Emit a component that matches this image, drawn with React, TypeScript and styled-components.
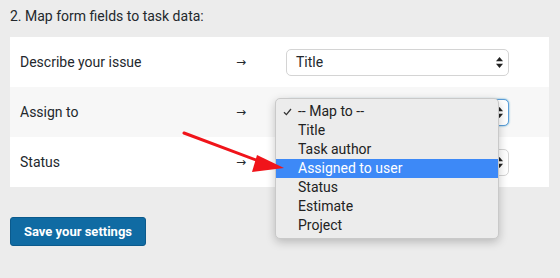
import React from 'react';
import styled, { createGlobalStyle } from 'styled-components';

const GlobalStyle = createGlobalStyle`
  html, body {
    margin: 0;
    padding: 0;
    background: #ececec;
  }
  body {
    font-family: Roboto, "Liberation Sans", Arial, sans-serif;
    color: #23282d;
  }
`;

const Page = styled.div`
  position: relative;
  width: 560px;
  height: 278px;
  padding: 8px 10px 0;
  box-sizing: border-box;
`;

const Heading = styled.h3`
  margin: 0 0 12px;
  font-size: 14px;
  font-weight: 400;
  line-height: 17px;
  color: #23282d;
`;

const Table = styled.div`
  width: 539px;
  background: #fff;
`;

const Row = styled.div<{ $striped?: boolean }>`
  display: grid;
  grid-template-columns: 216px 50px 223px;
  align-items: center;
  height: 50px;
  padding: 0 10px;
  background: ${(p) => (p.$striped ? '#f7f7f7' : '#fff')};
`;

const Label = styled.span`
  font-size: 14px;
  color: #23282d;
`;

const Arrow = styled.span`
  font-family: "DejaVu Sans", sans-serif;
  font-size: 12px;
  color: #23282d;
`;

const SelectWrap = styled.div`
  position: relative;
`;

const SelectBox = styled.div<{ $focused?: boolean }>`
  display: flex;
  align-items: center;
  justify-content: space-between;
  height: 27px;
  box-sizing: border-box;
  padding: 0 5px 0 9px;
  background: #fff;
  border: 1px solid ${(p) => (p.$focused ? '#5b9dd9' : '#d4d4d4')};
  border-radius: 5px;
  box-shadow: ${(p) => (p.$focused ? '0 0 2px rgba(30, 140, 190, 0.8)' : 'none')};
  font-size: 14px;
  color: #23282d;
`;

const Menu = styled.ul`
  position: absolute;
  left: -11px;
  top: -1px;
  width: 224px;
  margin: 0;
  padding: 3px 0;
  list-style: none;
  background: #ececec;
  border: 1px solid #c9c9c9;
  border-radius: 5px;
  box-shadow: 0 3px 10px rgba(0, 0, 0, 0.22);
  box-sizing: border-box;
  z-index: 2;
`;

const MenuItem = styled.li<{ $active?: boolean }>`
  position: relative;
  height: 19px;
  line-height: 19px;
  padding-left: 22px;
  font-size: 14px;
  color: ${(p) => (p.$active ? '#fff' : '#222')};
  background: ${(p) => (p.$active ? '#3d89f7' : 'transparent')};
`;

const Check = styled.svg`
  position: absolute;
  left: 7px;
  top: 6px;
`;

const SaveButton = styled.button`
  margin-top: 30px;
  height: 29px;
  padding: 0 13px;
  background: #106ba3;
  border: 1px solid #0b5a8c;
  border-radius: 3px;
  color: #fff;
  font-family: Roboto, "Liberation Sans", Arial, sans-serif;
  font-size: 13px;
  font-weight: 700;
  cursor: pointer;
`;

const Pointer = styled.svg`
  position: absolute;
  left: 180px;
  top: 128px;
  z-index: 3;
`;

const UpDown = () => (
  <svg width="7" height="11" viewBox="0 0 7 11">
    <path d="M3.5 0 L7 4.3 L0 4.3 Z" fill="#222" />
    <path d="M3.5 11 L7 6.7 L0 6.7 Z" fill="#222" />
  </svg>
);

const options = ['-- Map to --', 'Title', 'Task author', 'Assigned to user', 'Status', 'Estimate', 'Project'];

const App: React.FC = () => {
  return (
    <Page>
      <GlobalStyle />
      <Heading>2. Map form fields to task data:</Heading>
      <Table>
        <Row>
          <Label>Describe your issue</Label>
          <Arrow>→</Arrow>
          <SelectBox>
            Title
            <UpDown />
          </SelectBox>
        </Row>
        <Row $striped>
          <Label>Assign to</Label>
          <Arrow>→</Arrow>
          <SelectWrap>
            <SelectBox $focused>
              <span />
              <UpDown />
            </SelectBox>
            <Menu>
              {options.map((o, i) => (
                <MenuItem key={o} $active={o === 'Assigned to user'}>
                  {i === 0 && (
                    <Check width="9" height="8" viewBox="0 0 9 8">
                      <path d="M1 4.2 L3.4 6.6 L8 1" stroke="#333" strokeWidth="1.3" fill="none" />
                    </Check>
                  )}
                  {o}
                </MenuItem>
              ))}
            </Menu>
          </SelectWrap>
        </Row>
        <Row>
          <Label>Status</Label>
          <Arrow>→</Arrow>
          <SelectBox>
            <span />
            <UpDown />
          </SelectBox>
        </Row>
      </Table>
      <SaveButton>Save your settings</SaveButton>
      <Pointer width="110" height="50" viewBox="0 0 110 50">
        <line x1="4" y1="5" x2="84" y2="35" stroke="#f0141a" strokeWidth="3" strokeLinecap="round" />
        <path d="M104 40 L77 27 L72 44 Z" fill="#f0141a" />
      </Pointer>
    </Page>
  );
};

export default App;
